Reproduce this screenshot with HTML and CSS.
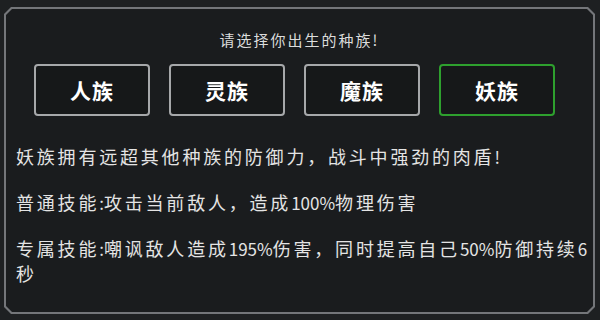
FILE: index.html
```html
<!DOCTYPE html>
<html lang="zh-CN">
<head>
<meta charset="utf-8">
<link rel="stylesheet" href="styles.css">
</head>
<body>
<div class="frame">
  <div class="panel">
    <div class="title">请选择你出生的种族!</div>
    <div class="races">
      <div class="race">人族</div>
      <div class="race">灵族</div>
      <div class="race">魔族</div>
      <div class="race selected">妖族</div>
    </div>
    <div class="desc">
      <p>妖族拥有远超其他种族的防御力，战斗中强劲的肉盾<span class="ascii">!</span></p>
      <p>普通技能<span class="ascii">:</span>攻击当前敌人，造成<span class="ascii">100%</span>物理伤害</p>
      <p>专属技能<span class="ascii">:</span>嘲讽敌人造成<span class="ascii">195%</span>伤害，同时提高自己<span class="ascii">50%</span>防御持续<span class="ascii">6</span>秒</p>
    </div>
  </div>
</div>
</body>
</html>
```

FILE: styles.css
```css
html, body {
  margin: 0;
  padding: 0;
  width: 600px;
  height: 320px;
  overflow: hidden;
  background: #1e2022;
}
body {
  font-family: "Noto Sans CJK SC", "Noto Sans", sans-serif;
  color: #e4e4e4;
}
.frame {
  margin: 7px 5px 6px 4px;
  height: 307px;
  padding: 2px;
  box-sizing: border-box;
  background: #74767a;
  clip-path: polygon(7px 0, calc(100% - 7px) 0, 100% 7px, 100% calc(100% - 7px), calc(100% - 7px) 100%, 7px 100%, 0 calc(100% - 7px), 0 7px);
}
.panel {
  height: 100%;
  box-sizing: border-box;
  background: #1a1c1e;
  clip-path: polygon(6px 0, calc(100% - 6px) 0, 100% 6px, 100% calc(100% - 6px), calc(100% - 6px) 100%, 6px 100%, 0 calc(100% - 6px), 0 6px);
  padding: 21px 0 0 0;
}
.title {
  text-align: center;
  font-size: 15px;
  line-height: 20px;
  letter-spacing: 2px;
  color: #dcdcdc;
}
.races {
  display: flex;
  gap: 19px;
  margin: 14px 0 0 28px;
}
.race {
  width: 116px;
  height: 52px;
  box-sizing: border-box;
  border: 2px solid #a6a8aa;
  border-radius: 4px;
  background: #161819;
  display: flex;
  align-items: center;
  justify-content: center;
  font-size: 21px;
  font-weight: 700;
  color: #ffffff;
  letter-spacing: 1px;
}
.race.selected {
  border-color: #2ea02e;
}
.desc {
  margin: 28px -6px 0 10px;
  font-size: 18px;
  line-height: 25px;
  letter-spacing: 2.8px;
}
.desc p {
  margin: 0 0 21px 0;
}
.ascii {
  letter-spacing: 0;
  font-size: 17px;
}
```
